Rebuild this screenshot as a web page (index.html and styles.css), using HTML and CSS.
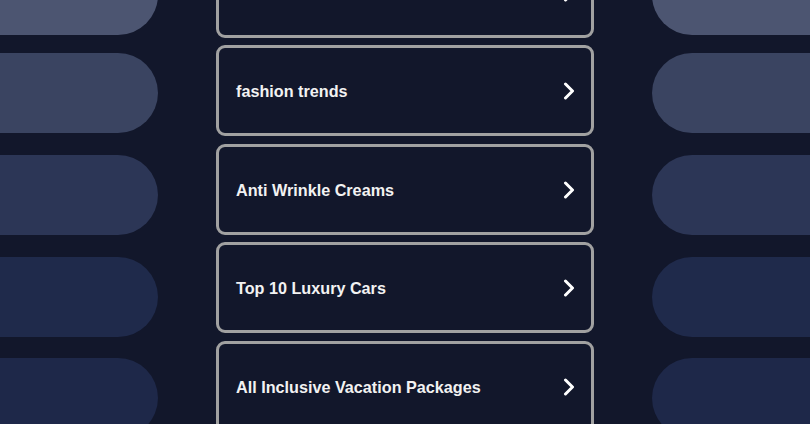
FILE: index.html
```html
<!DOCTYPE html>
<html lang="en">
<head>
<meta charset="utf-8">
<title>Links</title>
<link rel="stylesheet" href="styles.css">
</head>
<body>
<div class="page">
  <div class="side side-left">
    <div class="pill pill-1"></div>
    <div class="pill pill-2"></div>
    <div class="pill pill-3"></div>
    <div class="pill pill-4"></div>
    <div class="pill pill-5"></div>
  </div>
  <div class="links">
    <a class="card" href="#"><span class="label">Best Credit Cards</span><svg class="chev" viewBox="0 0 12 18" width="12" height="18"><polyline points="2.5,2 9.5,9 2.5,16"/></svg></a>
    <a class="card" href="#"><span class="label">fashion trends</span><svg class="chev" viewBox="0 0 12 18" width="12" height="18"><polyline points="2.5,2 9.5,9 2.5,16"/></svg></a>
    <a class="card" href="#"><span class="label">Anti Wrinkle Creams</span><svg class="chev" viewBox="0 0 12 18" width="12" height="18"><polyline points="2.5,2 9.5,9 2.5,16"/></svg></a>
    <a class="card" href="#"><span class="label">Top 10 Luxury Cars</span><svg class="chev" viewBox="0 0 12 18" width="12" height="18"><polyline points="2.5,2 9.5,9 2.5,16"/></svg></a>
    <a class="card" href="#"><span class="label">All Inclusive Vacation Packages</span><svg class="chev" viewBox="0 0 12 18" width="12" height="18"><polyline points="2.5,2 9.5,9 2.5,16"/></svg></a>
  </div>
  <div class="side side-right">
    <div class="pill pill-1"></div>
    <div class="pill pill-2"></div>
    <div class="pill pill-3"></div>
    <div class="pill pill-4"></div>
    <div class="pill pill-5"></div>
  </div>
</div>
</body>
</html>
```
FILE: styles.css
```css
html, body {
  margin: 0;
  padding: 0;
  height: 100%;
  background: #12172b;
  overflow: hidden;
}

.page {
  display: flex;
  justify-content: space-between;
  height: 424px;
  overflow: hidden;
  font-family: "Liberation Sans", Arial, sans-serif;
}

.side {
  width: 158px;
  display: flex;
  flex-direction: column;
  margin-top: -45px;
}

.pill {
  height: 80px;
  flex: 0 0 80px;
  margin-bottom: 22px;
}

.pill-1 { margin-bottom: 18px; background: #4c5571; }
.pill-2 { background: #3a4461; }
.pill-3 { background: #2c3656; }
.pill-4 { background: #1f2a4b; margin-bottom: 21px; }
.pill-5 { background: #1e2849; }

.side-left .pill {
  border-radius: 0 40px 40px 0;
}

.side-right .pill {
  border-radius: 40px 0 0 40px;
}

.links {
  width: 378px;
  display: flex;
  flex-direction: column;
  gap: 7.5px;
  margin-top: -53.5px;
}

.card {
  box-sizing: border-box;
  height: 91px;
  flex: 0 0 91px;
  display: flex;
  align-items: center;
  justify-content: space-between;
  padding: 1px 17px 0 17px;
  border: 3px solid #a1a1a1;
  border-radius: 9px;
  background: #12172b;
  color: #f2f2f2;
  text-decoration: none;
}

.label {
  font-size: 16.2px;
  font-weight: bold;
  line-height: 20px;
}

.chev {
  display: block;
  margin-right: -1px;
  margin-top: 0;
}

.chev polyline {
  fill: none;
  stroke: #ffffff;
  stroke-width: 3;
  stroke-linecap: round;
  stroke-linejoin: round;
}
```
